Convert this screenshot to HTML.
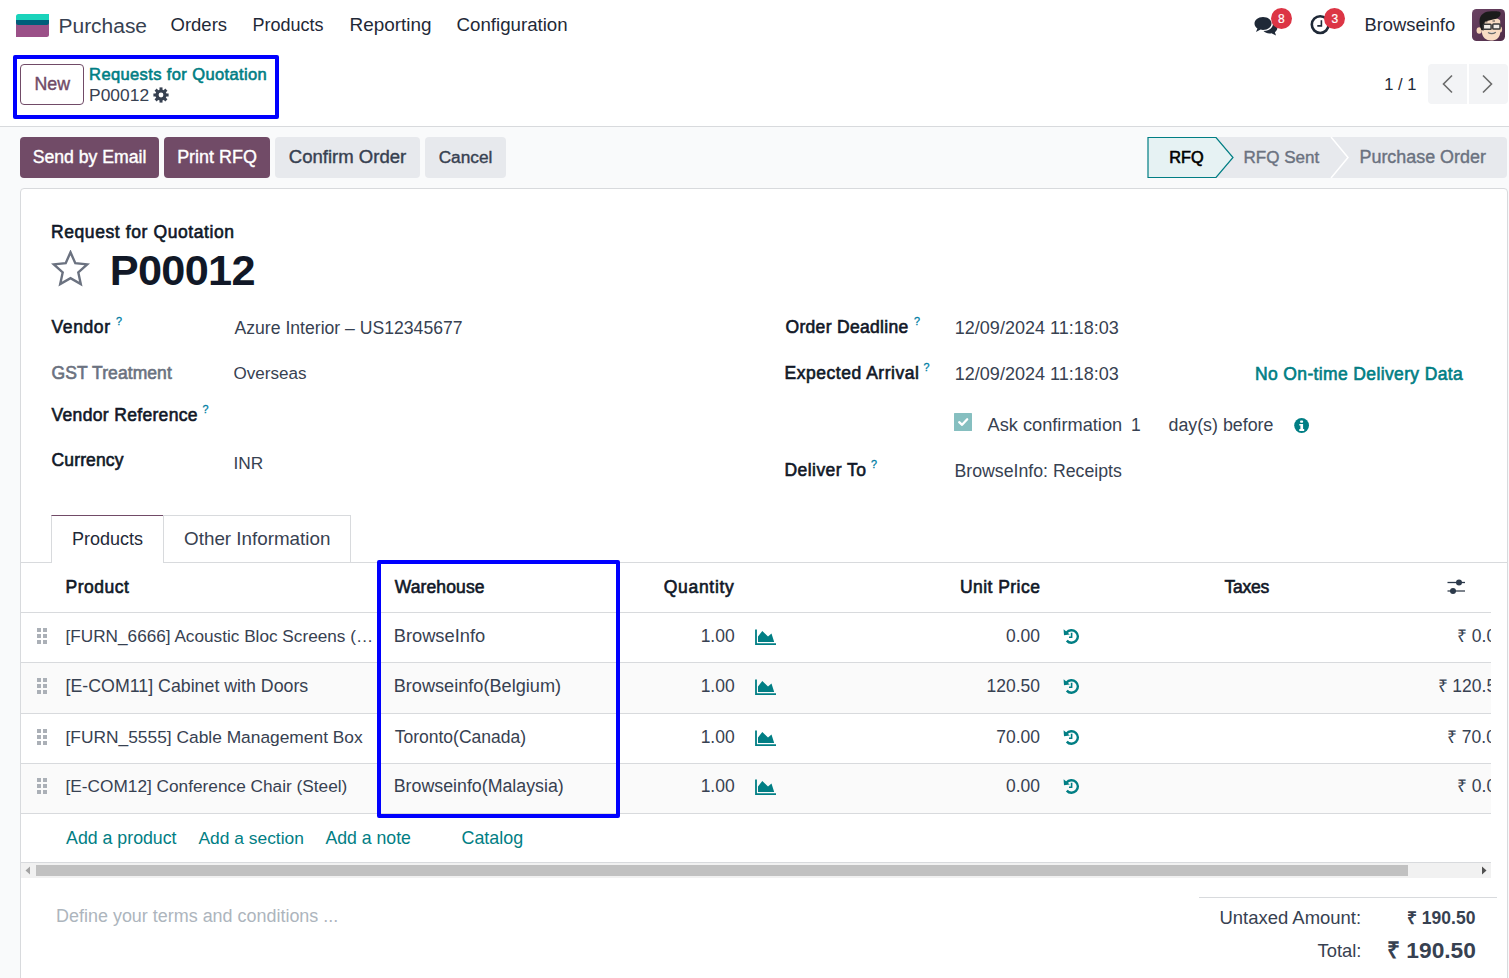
<!DOCTYPE html>
<html><head><meta charset="utf-8"><title>Purchase</title>
<style>
*{box-sizing:border-box;margin:0;padding:0}
html,body{width:1509px;height:978px;overflow:hidden;background:#fff;font-family:"Liberation Sans",sans-serif;color:#374151}
.t{position:absolute;white-space:nowrap}
.r{position:absolute}
</style></head><body>
<div class="r" style="left:0px;top:127px;width:1509px;height:851px;background:#f9fafb"></div>
<div class="r" style="left:0px;top:126px;width:1509px;height:1px;background:#d8dadd"></div>
<div class="r" style="left:20px;top:188px;width:1488px;height:820px;background:#fff;border:1px solid #d8dadd;border-radius:4px"></div>
<svg class="r" style="left:16px;top:14px" width="33" height="23" viewBox="0 0 33 23"><path d="M0 9H33V20.5A2.5 2.5 0 0 1 30.5 23H0Z" fill="#9b5088"/><path d="M2.5 0H33V6.2H0V2.5A2.5 2.5 0 0 1 2.5 0Z" fill="#1ad3bb"/><path d="M0 5.9H33V8.5A2.5 2.5 0 0 1 30.5 11H2.5A2.5 2.5 0 0 1 0 8.5Z" fill="#005e7a"/></svg>
<div class="t" style="left:58.50px;top:16.00px;font-size:20.967px;line-height:20.967px;color:#374151;">Purchase</div>
<div class="t" style="left:170.50px;top:16.00px;font-size:18.510px;line-height:18.510px;color:#1f2937;">Orders</div>
<div class="t" style="left:252.50px;top:16.00px;font-size:18.015px;line-height:18.015px;color:#1f2937;">Products</div>
<div class="t" style="left:349.50px;top:16.00px;font-size:18.919px;line-height:18.919px;color:#1f2937;">Reporting</div>
<div class="t" style="left:456.50px;top:16.00px;font-size:18.701px;line-height:18.701px;color:#1f2937;">Configuration</div>
<div class="t" style="left:1364.50px;top:16.00px;font-size:18.324px;line-height:18.324px;color:#1f2937;">Browseinfo</div>
<svg class="r" style="left:1253px;top:14px" width="26" height="24" viewBox="0 0 26 24">
<path d="M10 3C5 3 1.5 6 1.5 9.5c0 2 1.1 3.7 2.9 4.9L3 18l4.6-2.4c.8.2 1.6.3 2.4.3 5 0 8.5-3 8.5-6.5S15 3 10 3z" fill="#1f2937"/>
<path d="M20 9.5c0 4.4-4.3 7.5-9.5 7.6 1.4 1.5 3.6 2.4 6 2.4.7 0 1.4-.1 2-.2L23 21.5l-1.1-3.2c1.5-1 2.4-2.5 2.4-4.2 0-1.9-1.2-3.6-3.1-4.6z" fill="#1f2937"/>
</svg>
<div class="r" style="left:1271px;top:8px;width:21px;height:21px;background:#dc3545;border-radius:50%"></div>
<div class="t" style="left:981.30px;width:600px;text-align:center;top:13.00px;font-size:12.000px;line-height:12.000px;color:#fff;-webkit-text-stroke:0.2px #fff;">8</div>
<svg class="r" style="left:1309px;top:14px" width="24" height="24" viewBox="0 0 24 24">
<circle cx="11.2" cy="10.6" r="8.4" fill="none" stroke="#1f2937" stroke-width="2.6"/>
<path d="M12.4 6.2V11.9H8.3" fill="none" stroke="#1f2937" stroke-width="1.6"/>
</svg>
<div class="r" style="left:1324px;top:8px;width:21px;height:21px;background:#dc3545;border-radius:50%"></div>
<div class="t" style="left:1034.90px;width:600px;text-align:center;top:13.00px;font-size:12.000px;line-height:12.000px;color:#fff;-webkit-text-stroke:0.2px #fff;">3</div>
<svg class="r" style="left:1472px;top:9px" width="33" height="32" viewBox="0 0 33 32">
<defs><linearGradient id="ag" x1="0" y1="0" x2="1" y2="1"><stop offset="0" stop-color="#6a4363"/><stop offset="1" stop-color="#4f2c48"/></linearGradient></defs>
<rect width="33" height="32" rx="4.5" fill="url(#ag)"/>
<ellipse cx="7.2" cy="21.5" rx="2.6" ry="3.3" fill="#f5d4b8"/>
<ellipse cx="28.3" cy="20.5" rx="1.8" ry="3" fill="#f0cdb0"/>
<path d="M9 12C9 9 28 8 28.2 12L28.2 23C28.2 29 24 31.5 19 31.5C14 31.5 10.5 28.5 10 24Z" fill="#f9dcc3"/>
<path d="M7.5 12C7.5 5.5 13 2.3 19.5 2.3C24 2.3 28.5 2 28.6 4.2C28.8 7.2 26 9.3 22 10.3L13 12.5C12.3 15 12 18 11.6 21.5L9.3 21C8 18 7.5 15 7.5 12Z" fill="#1b1b1b"/>
<path d="M13 12.8H15.5M20.5 12H23" stroke="#333" stroke-width="0.9"/>
<rect x="11.3" y="15.2" width="7.8" height="5" rx="0.8" fill="#f2ece6" stroke="#3a3a3a" stroke-width="1.5"/>
<rect x="20.8" y="15" width="7.2" height="5" rx="0.8" fill="#f2ece6" stroke="#3a3a3a" stroke-width="1.5"/>
<path d="M16 23.5Q20 25.8 23.8 23.2" stroke="#6b6b6b" stroke-width="1.3" fill="#d9d9d9"/>
</svg>
<div class="r" style="left:20px;top:64px;width:64px;height:41px;border:1px solid #714b67;border-radius:4px;background:#fff"></div>
<div class="t" style="left:-247.80px;width:600px;text-align:center;top:76.00px;font-size:17.768px;line-height:17.768px;color:#714b67;-webkit-text-stroke:0.4px currentColor;">New</div>
<div class="t" style="left:89.10px;top:66.00px;font-size:16.500px;line-height:16.500px;color:#017e84;-webkit-text-stroke:0.6px currentColor;letter-spacing:0.381px;">Requests for Quotation</div>
<div class="t" style="left:89.10px;top:87.00px;font-size:17.400px;line-height:17.400px;color:#374151;">P00012</div>
<svg class="r" style="left:153px;top:86.5px" width="16" height="16" viewBox="0 0 16 16"><g fill="#374151"><circle cx="8" cy="8" r="5.6"/><rect x="6.5" y="0.4" width="3" height="4" transform="rotate(0 8 8)"/><rect x="6.5" y="0.4" width="3" height="4" transform="rotate(45 8 8)"/><rect x="6.5" y="0.4" width="3" height="4" transform="rotate(90 8 8)"/><rect x="6.5" y="0.4" width="3" height="4" transform="rotate(135 8 8)"/><rect x="6.5" y="0.4" width="3" height="4" transform="rotate(180 8 8)"/><rect x="6.5" y="0.4" width="3" height="4" transform="rotate(225 8 8)"/><rect x="6.5" y="0.4" width="3" height="4" transform="rotate(270 8 8)"/><rect x="6.5" y="0.4" width="3" height="4" transform="rotate(315 8 8)"/></g><circle cx="8" cy="8" r="2.4" fill="#fff"/></svg>
<div class="r" style="left:13px;top:55px;width:266px;height:64px;border:4px solid #0000ff;border-radius:2px"></div>
<div class="t" style="left:1384.20px;top:77.00px;font-size:16.533px;line-height:16.533px;color:#1f2937;">1 / 1</div>
<div class="r" style="left:1428px;top:64px;width:39px;height:40px;background:#f3f4f6;border-radius:4px 0 0 4px"></div>
<div class="r" style="left:1469px;top:64px;width:39px;height:40px;background:#f3f4f6;border-radius:0 4px 4px 0"></div>
<svg class="r" style="left:1440px;top:74px" width="14" height="20" viewBox="0 0 14 20"><path d="M12 1.5L3.5 10L12 18.5" fill="none" stroke="#6b6b6b" stroke-width="1.6"/></svg>
<svg class="r" style="left:1481px;top:74px" width="14" height="20" viewBox="0 0 14 20"><path d="M2 1.5L10.5 10L2 18.5" fill="none" stroke="#6b6b6b" stroke-width="1.6"/></svg>
<div class="r" style="left:20px;top:137px;width:139px;height:41px;background:#714b67;border-radius:4px"></div>
<div class="t" style="left:-210.50px;width:600px;text-align:center;top:149.00px;font-size:17.658px;line-height:17.658px;color:#fff;-webkit-text-stroke:0.4px currentColor;">Send by Email</div>
<div class="r" style="left:164px;top:137px;width:106px;height:41px;background:#714b67;border-radius:4px"></div>
<div class="t" style="left:-83.00px;width:600px;text-align:center;top:149.00px;font-size:17.944px;line-height:17.944px;color:#fff;-webkit-text-stroke:0.4px currentColor;">Print RFQ</div>
<div class="r" style="left:275px;top:137px;width:145px;height:41px;background:#e7e9ed;border-radius:4px"></div>
<div class="t" style="left:47.50px;width:600px;text-align:center;top:148.00px;font-size:18.559px;line-height:18.559px;color:#374151;-webkit-text-stroke:0.4px currentColor;">Confirm Order</div>
<div class="r" style="left:425px;top:137px;width:81px;height:41px;background:#e7e9ed;border-radius:4px"></div>
<div class="t" style="left:165.50px;width:600px;text-align:center;top:149.00px;font-size:17.263px;line-height:17.263px;color:#374151;-webkit-text-stroke:0.4px currentColor;">Cancel</div>
<svg class="r" style="left:1147px;top:137px" width="361" height="41" viewBox="0 0 361 41">
<path d="M69 0H356a4 4 0 0 1 4 4V37a4 4 0 0 1-4 4H69z" fill="#e7e9ed"/>
<path d="M184 0L201 20.5L184 41" fill="none" stroke="#fff" stroke-width="1.5"/>
<path d="M1 0.5H69L86 20.5L69 40.5H1z" fill="#e6f2f3" stroke="#017e84" stroke-width="1.2"/>
</svg>
<div class="t" style="left:1169.30px;top:149.00px;font-size:16.300px;line-height:16.300px;color:#000;-webkit-text-stroke:0.6px currentColor;letter-spacing:0.000px;">RFQ</div>
<div class="t" style="left:1243.50px;top:149.00px;font-size:17.045px;line-height:17.045px;color:#6b7280;-webkit-text-stroke:0.4px currentColor;">RFQ Sent</div>
<div class="t" style="left:1359.50px;top:149.00px;font-size:17.927px;line-height:17.927px;color:#6b7280;-webkit-text-stroke:0.4px currentColor;">Purchase Order</div>
<div class="t" style="left:50.90px;top:224.00px;font-size:17.500px;line-height:17.500px;color:#111827;-webkit-text-stroke:0.6px currentColor;letter-spacing:0.600px;">Request for Quotation</div>
<svg class="r" style="left:51px;top:250px" width="39" height="37" viewBox="0 0 39 37">
<path d="M19.5 2.3L24.3 13.2L36.2 14.4L27.3 22.4L29.8 34.1L19.5 28.2L9.2 34.1L11.7 22.4L2.8 14.4L14.7 13.2Z" fill="none" stroke="#6b7280" stroke-width="2.4" stroke-linejoin="miter"/>
</svg>
<div class="t" style="left:109.80px;top:249.00px;font-size:43.307px;line-height:43.307px;font-weight:bold;color:#111827;letter-spacing:-0.7px;">P00012</div>
<div class="t" style="left:51.50px;top:319.00px;font-size:17.500px;line-height:17.500px;color:#111827;-webkit-text-stroke:0.6px currentColor;letter-spacing:0.600px;">Vendor</div>
<div class="t" style="left:116.00px;top:316.00px;font-size:10.800px;line-height:10.800px;color:#0180a5;-webkit-text-stroke:0.3px currentColor;">?</div>
<div class="t" style="left:234.50px;top:320.00px;font-size:17.610px;line-height:17.610px;color:#374151;">Azure Interior – US12345677</div>
<div class="t" style="left:51.50px;top:365.00px;font-size:17.500px;line-height:17.500px;color:#6b7280;-webkit-text-stroke:0.6px currentColor;letter-spacing:0.083px;">GST Treatment</div>
<div class="t" style="left:233.50px;top:365.00px;font-size:17.063px;line-height:17.063px;color:#374151;">Overseas</div>
<div class="t" style="left:51.50px;top:407.00px;font-size:17.500px;line-height:17.500px;color:#111827;-webkit-text-stroke:0.6px currentColor;letter-spacing:0.333px;">Vendor Reference</div>
<div class="t" style="left:202.50px;top:404.00px;font-size:10.800px;line-height:10.800px;color:#0180a5;-webkit-text-stroke:0.3px currentColor;">?</div>
<div class="t" style="left:51.50px;top:452.00px;font-size:17.500px;line-height:17.500px;color:#111827;-webkit-text-stroke:0.6px currentColor;letter-spacing:0.143px;">Currency</div>
<div class="t" style="left:233.50px;top:455.00px;font-size:17.300px;line-height:17.300px;color:#374151;">INR</div>
<div class="t" style="left:785.50px;top:319.00px;font-size:17.500px;line-height:17.500px;color:#111827;-webkit-text-stroke:0.6px currentColor;letter-spacing:0.308px;">Order Deadline</div>
<div class="t" style="left:914.00px;top:316.00px;font-size:10.800px;line-height:10.800px;color:#0180a5;-webkit-text-stroke:0.3px currentColor;">?</div>
<div class="t" style="left:954.80px;top:319.00px;font-size:18.023px;line-height:18.023px;color:#374151;">12/09/2024 11:18:03</div>
<div class="t" style="left:784.50px;top:365.00px;font-size:17.500px;line-height:17.500px;color:#111827;-webkit-text-stroke:0.6px currentColor;letter-spacing:0.533px;">Expected Arrival</div>
<div class="t" style="left:923.50px;top:362.00px;font-size:10.800px;line-height:10.800px;color:#0180a5;-webkit-text-stroke:0.3px currentColor;">?</div>
<div class="t" style="left:954.80px;top:365.00px;font-size:18.023px;line-height:18.023px;color:#374151;">12/09/2024 11:18:03</div>
<div class="t" style="left:1255.00px;top:366.00px;font-size:17.500px;line-height:17.500px;color:#017e84;-webkit-text-stroke:0.6px currentColor;letter-spacing:0.365px;">No On-time Delivery Data</div>
<div class="r" style="left:954px;top:413px;width:18px;height:18px;background:#86bfc0;border-radius:0.5px"></div>
<svg class="r" style="left:954px;top:413px" width="18" height="18" viewBox="0 0 18 18"><path d="M5.2 9.2L8.1 11.8L13.2 6.3" fill="none" stroke="#fff" stroke-width="2.3" stroke-linecap="round" stroke-linejoin="round"/></svg>
<div class="t" style="left:987.50px;top:416.00px;font-size:18.236px;line-height:18.236px;color:#374151;">Ask confirmation</div>
<div class="t" style="left:1131.00px;top:417.00px;font-size:17.500px;line-height:17.500px;color:#374151;">1</div>
<div class="t" style="left:1168.50px;top:417.00px;font-size:17.813px;line-height:17.813px;color:#374151;">day(s) before</div>
<svg class="r" style="left:1294px;top:418px" width="16" height="16" viewBox="0 0 16 16"><circle cx="7.6" cy="7.5" r="7.4" fill="#017e84"/><rect x="6.1" y="2.4" width="3" height="2.3" rx="0.8" fill="#fff"/><path d="M5.3 5.9H9.1V11.1H10.2V12.9H5.3V11.1H6.4V7.6H5.3Z" fill="#fff"/></svg>
<div class="t" style="left:784.50px;top:462.00px;font-size:17.500px;line-height:17.500px;color:#111827;-webkit-text-stroke:0.6px currentColor;letter-spacing:0.444px;">Deliver To</div>
<div class="t" style="left:871.00px;top:459.00px;font-size:10.800px;line-height:10.800px;color:#0180a5;-webkit-text-stroke:0.3px currentColor;">?</div>
<div class="t" style="left:954.50px;top:463.00px;font-size:17.713px;line-height:17.713px;color:#374151;">BrowseInfo: Receipts</div>
<div class="r" style="left:21px;top:562px;width:1486px;height:1px;background:#d8dadd"></div>
<div class="r" style="left:51px;top:515px;width:113px;height:48px;background:#fff;border:1px solid #d8dadd;border-top:1px solid #714b67;border-bottom:none"></div>
<div class="r" style="left:163px;top:515px;width:188px;height:47px;background:#fff;border:1px solid #d8dadd;border-bottom:none"></div>
<div class="t" style="left:71.90px;top:530.00px;font-size:18.015px;line-height:18.015px;color:#1f2937;">Products</div>
<div class="t" style="left:184.10px;top:530.00px;font-size:18.806px;line-height:18.806px;color:#374151;">Other Information</div>
<div class="r" style="left:21px;top:863px;width:1470px;height:15px;background:#f1f1f1"></div>
<div class="r" style="left:36px;top:865px;width:1372px;height:11px;background:#c1c1c1"></div>
<svg class="r" style="left:24px;top:866px" width="8" height="9" viewBox="0 0 8 9"><path d="M6 0.5V8.5L1.5 4.5Z" fill="#a3a3a3"/></svg>
<svg class="r" style="left:1480px;top:866px" width="8" height="9" viewBox="0 0 8 9"><path d="M2 0.5V8.5L6.5 4.5Z" fill="#505050"/></svg>
<div class="t" style="left:56.10px;top:908.00px;font-size:17.949px;line-height:17.949px;color:#adb5bd;">Define your terms and conditions ...</div>
<div class="r" style="left:1199px;top:897px;width:298px;height:1px;background:#d8dadd"></div>
<div class="t" style="right:147.94px;top:909.00px;font-size:18.464px;line-height:18.464px;color:#374151;">Untaxed Amount:</div>
<div class="t" style="right:33.61px;top:910.00px;font-size:17.500px;line-height:17.500px;font-weight:bold;color:#374151;">₹ 190.50</div>
<div class="t" style="right:147.61px;top:942.00px;font-size:18.364px;line-height:18.364px;color:#374151;">Total:</div>
<div class="t" style="right:33.09px;top:939.00px;font-size:22.762px;line-height:22.762px;font-weight:bold;color:#374151;">₹ 190.50</div>
<div class="r" style="left:21px;top:563px;width:1470px;height:300px;overflow:hidden"><div class="r" style="left:-21px;top:-563px;width:1509px;height:978px">
<div class="r" style="left:0px;top:612px;width:1509px;height:1px;background:#d8dadd"></div>
<div class="r" style="left:0px;top:663px;width:1509px;height:50px;background:#fafafa"></div>
<div class="r" style="left:0px;top:662px;width:1509px;height:1px;background:#d8dadd"></div>
<div class="r" style="left:0px;top:713px;width:1509px;height:1px;background:#d8dadd"></div>
<div class="r" style="left:0px;top:764px;width:1509px;height:49px;background:#fafafa"></div>
<div class="r" style="left:0px;top:763px;width:1509px;height:1px;background:#d8dadd"></div>
<div class="r" style="left:0px;top:813px;width:1509px;height:1px;background:#d8dadd"></div>
<div class="r" style="left:0px;top:862px;width:1509px;height:1px;background:#d8dadd"></div>
<div class="t" style="left:65.50px;top:579.00px;font-size:17.500px;line-height:17.500px;color:#111827;-webkit-text-stroke:0.6px currentColor;letter-spacing:0.500px;">Product</div>
<div class="t" style="left:394.70px;top:579.00px;font-size:17.500px;line-height:17.500px;color:#111827;-webkit-text-stroke:0.6px currentColor;letter-spacing:0.125px;">Warehouse</div>
<div class="t" style="right:774.41px;top:579.00px;font-size:17.500px;line-height:17.500px;color:#111827;-webkit-text-stroke:0.6px currentColor;letter-spacing:0.714px;">Quantity</div>
<div class="t" style="right:468.70px;top:579.00px;font-size:17.500px;line-height:17.500px;color:#111827;-webkit-text-stroke:0.6px currentColor;letter-spacing:0.444px;">Unit Price</div>
<div class="t" style="left:1224.50px;top:579.00px;font-size:17.500px;line-height:17.500px;color:#111827;-webkit-text-stroke:0.6px currentColor;letter-spacing:-0.250px;">Taxes</div>
<svg class="r" style="left:1446px;top:578px" width="20" height="17" viewBox="0 0 20 17">
<path d="M1.5 4.5H19" stroke="#2c3a4b" stroke-width="1.3"/><circle cx="13" cy="4.5" r="3" fill="#2c3a4b"/>
<path d="M1.5 13H19" stroke="#5c6470" stroke-width="1.6"/><circle cx="7" cy="13" r="3" fill="#2c3a4b"/>
</svg>
<div class="r" style="left:37px;top:628px;width:4px;height:4px;background:#abb0b7"></div>
<div class="r" style="left:37px;top:634px;width:4px;height:4px;background:#abb0b7"></div>
<div class="r" style="left:37px;top:640px;width:4px;height:4px;background:#abb0b7"></div>
<div class="r" style="left:43px;top:628px;width:4px;height:4px;background:#abb0b7"></div>
<div class="r" style="left:43px;top:634px;width:4px;height:4px;background:#abb0b7"></div>
<div class="r" style="left:43px;top:640px;width:4px;height:4px;background:#abb0b7"></div>
<div class="t" style="left:65.50px;top:628.00px;font-size:17.200px;line-height:17.200px;color:#374151;">[FURN_6666] Acoustic Bloc Screens (…</div>
<div class="t" style="left:393.70px;top:627.00px;font-size:18.314px;line-height:18.314px;color:#374151;">BrowseInfo</div>
<div class="t" style="right:774.30px;top:628.00px;font-size:17.500px;line-height:17.500px;color:#374151;">1.00</div>
<svg class="r" style="left:754px;top:629px" width="23" height="17" viewBox="0 0 23 17"><path d="M2 0.5V15.2H22" fill="none" stroke="#017e84" stroke-width="1.8"/><path d="M4 7.5L8.3 2L14 7.5L17.5 4.5L20.2 13H4Z" fill="#017e84"/></svg>
<div class="t" style="right:469.00px;top:628.00px;font-size:17.500px;line-height:17.500px;color:#374151;">0.00</div>
<svg class="r" style="left:1062px;top:628px" width="18" height="17" viewBox="0 0 18 17"><path d="M4.8 12.6A6.3 6.3 0 1 0 4.6 4.6" fill="none" stroke="#017e84" stroke-width="2.4"/><path d="M1.6 1.2L2 7.2L7.8 6.6Z" fill="#017e84"/><path d="M9.6 4.8V9.2H7" fill="none" stroke="#017e84" stroke-width="1.6"/></svg>
<div class="t" style="left:1457.00px;top:628.00px;font-size:17.500px;line-height:17.500px;color:#374151;">₹ 0.00</div>
<div class="r" style="left:37px;top:678px;width:4px;height:4px;background:#abb0b7"></div>
<div class="r" style="left:37px;top:684px;width:4px;height:4px;background:#abb0b7"></div>
<div class="r" style="left:37px;top:690px;width:4px;height:4px;background:#abb0b7"></div>
<div class="r" style="left:43px;top:678px;width:4px;height:4px;background:#abb0b7"></div>
<div class="r" style="left:43px;top:684px;width:4px;height:4px;background:#abb0b7"></div>
<div class="r" style="left:43px;top:690px;width:4px;height:4px;background:#abb0b7"></div>
<div class="t" style="left:65.50px;top:678.00px;font-size:17.791px;line-height:17.791px;color:#374151;">[E-COM11] Cabinet with Doors</div>
<div class="t" style="left:393.70px;top:677.00px;font-size:18.157px;line-height:18.157px;color:#374151;">Browseinfo(Belgium)</div>
<div class="t" style="right:774.30px;top:678.00px;font-size:17.500px;line-height:17.500px;color:#374151;">1.00</div>
<svg class="r" style="left:754px;top:679px" width="23" height="17" viewBox="0 0 23 17"><path d="M2 0.5V15.2H22" fill="none" stroke="#017e84" stroke-width="1.8"/><path d="M4 7.5L8.3 2L14 7.5L17.5 4.5L20.2 13H4Z" fill="#017e84"/></svg>
<div class="t" style="right:469.00px;top:678.00px;font-size:17.500px;line-height:17.500px;color:#374151;">120.50</div>
<svg class="r" style="left:1062px;top:678px" width="18" height="17" viewBox="0 0 18 17"><path d="M4.8 12.6A6.3 6.3 0 1 0 4.6 4.6" fill="none" stroke="#017e84" stroke-width="2.4"/><path d="M1.6 1.2L2 7.2L7.8 6.6Z" fill="#017e84"/><path d="M9.6 4.8V9.2H7" fill="none" stroke="#017e84" stroke-width="1.6"/></svg>
<div class="t" style="left:1437.50px;top:678.00px;font-size:17.500px;line-height:17.500px;color:#374151;">₹ 120.50</div>
<div class="r" style="left:37px;top:729px;width:4px;height:4px;background:#abb0b7"></div>
<div class="r" style="left:37px;top:735px;width:4px;height:4px;background:#abb0b7"></div>
<div class="r" style="left:37px;top:741px;width:4px;height:4px;background:#abb0b7"></div>
<div class="r" style="left:43px;top:729px;width:4px;height:4px;background:#abb0b7"></div>
<div class="r" style="left:43px;top:735px;width:4px;height:4px;background:#abb0b7"></div>
<div class="r" style="left:43px;top:741px;width:4px;height:4px;background:#abb0b7"></div>
<div class="t" style="left:65.50px;top:729.00px;font-size:17.376px;line-height:17.376px;color:#374151;">[FURN_5555] Cable Management Box</div>
<div class="t" style="left:394.70px;top:729.00px;font-size:17.500px;line-height:17.500px;color:#374151;">Toronto(Canada)</div>
<div class="t" style="right:774.30px;top:729.00px;font-size:17.500px;line-height:17.500px;color:#374151;">1.00</div>
<svg class="r" style="left:754px;top:730px" width="23" height="17" viewBox="0 0 23 17"><path d="M2 0.5V15.2H22" fill="none" stroke="#017e84" stroke-width="1.8"/><path d="M4 7.5L8.3 2L14 7.5L17.5 4.5L20.2 13H4Z" fill="#017e84"/></svg>
<div class="t" style="right:469.00px;top:729.00px;font-size:17.500px;line-height:17.500px;color:#374151;">70.00</div>
<svg class="r" style="left:1062px;top:729px" width="18" height="17" viewBox="0 0 18 17"><path d="M4.8 12.6A6.3 6.3 0 1 0 4.6 4.6" fill="none" stroke="#017e84" stroke-width="2.4"/><path d="M1.6 1.2L2 7.2L7.8 6.6Z" fill="#017e84"/><path d="M9.6 4.8V9.2H7" fill="none" stroke="#017e84" stroke-width="1.6"/></svg>
<div class="t" style="left:1447.00px;top:729.00px;font-size:17.500px;line-height:17.500px;color:#374151;">₹ 70.00</div>
<div class="r" style="left:37px;top:778px;width:4px;height:4px;background:#abb0b7"></div>
<div class="r" style="left:37px;top:784px;width:4px;height:4px;background:#abb0b7"></div>
<div class="r" style="left:37px;top:790px;width:4px;height:4px;background:#abb0b7"></div>
<div class="r" style="left:43px;top:778px;width:4px;height:4px;background:#abb0b7"></div>
<div class="r" style="left:43px;top:784px;width:4px;height:4px;background:#abb0b7"></div>
<div class="r" style="left:43px;top:790px;width:4px;height:4px;background:#abb0b7"></div>
<div class="t" style="left:65.50px;top:778.00px;font-size:17.262px;line-height:17.262px;color:#374151;">[E-COM12] Conference Chair (Steel)</div>
<div class="t" style="left:393.70px;top:778.00px;font-size:17.817px;line-height:17.817px;color:#374151;">Browseinfo(Malaysia)</div>
<div class="t" style="right:774.30px;top:778.00px;font-size:17.500px;line-height:17.500px;color:#374151;">1.00</div>
<svg class="r" style="left:754px;top:779px" width="23" height="17" viewBox="0 0 23 17"><path d="M2 0.5V15.2H22" fill="none" stroke="#017e84" stroke-width="1.8"/><path d="M4 7.5L8.3 2L14 7.5L17.5 4.5L20.2 13H4Z" fill="#017e84"/></svg>
<div class="t" style="right:469.00px;top:778.00px;font-size:17.500px;line-height:17.500px;color:#374151;">0.00</div>
<svg class="r" style="left:1062px;top:778px" width="18" height="17" viewBox="0 0 18 17"><path d="M4.8 12.6A6.3 6.3 0 1 0 4.6 4.6" fill="none" stroke="#017e84" stroke-width="2.4"/><path d="M1.6 1.2L2 7.2L7.8 6.6Z" fill="#017e84"/><path d="M9.6 4.8V9.2H7" fill="none" stroke="#017e84" stroke-width="1.6"/></svg>
<div class="t" style="left:1457.00px;top:778.00px;font-size:17.500px;line-height:17.500px;color:#374151;">₹ 0.00</div>
<div class="t" style="left:66.10px;top:830.00px;font-size:17.740px;line-height:17.740px;color:#017e84;">Add a product</div>
<div class="t" style="left:198.50px;top:830.00px;font-size:17.403px;line-height:17.403px;color:#017e84;">Add a section</div>
<div class="t" style="left:325.40px;top:830.00px;font-size:17.692px;line-height:17.692px;color:#017e84;">Add a note</div>
<div class="t" style="left:461.50px;top:830.00px;font-size:17.900px;line-height:17.900px;color:#017e84;">Catalog</div>
</div></div>
<div class="r" style="left:377px;top:560px;width:243px;height:258px;border:4px solid #0000ff;border-radius:2px"></div>
</body></html>
